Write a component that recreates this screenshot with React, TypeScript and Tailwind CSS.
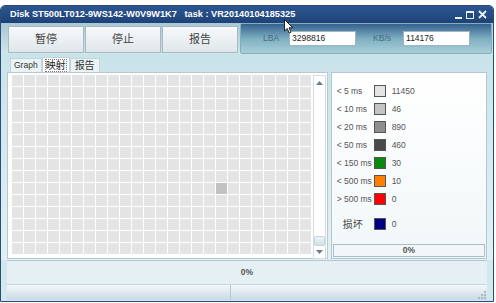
import React from 'react';

const COLS = 25;
const ROWS = 15;

const legend = [
  { label: '< 5 ms', color: '#e4e4e4', value: '11450' },
  { label: '< 10 ms', color: '#c4c4c4', value: '46' },
  { label: '< 20 ms', color: '#8e8e8e', value: '890' },
  { label: '< 50 ms', color: '#4a4a4a', value: '460' },
  { label: '< 150 ms', color: '#0a8a0a', value: '30' },
  { label: '< 500 ms', color: '#ff8000', value: '10' },
  { label: '> 500 ms', color: '#ff0000', value: '0' },
];

const ToolButton = ({ label }: { label: string }) => (
  <button className="w-[76px] h-[27px] border border-[#a9b8c2] bg-gradient-to-b from-[#f7f9fa] to-[#dfe6ea] text-[11px] text-[#444] flex items-center justify-center">
    {label}
  </button>
);

const LegendRow = ({ label, color, value }: { label: string; color: string; value: string }) => (
  <div className="flex items-center h-[18px]">
    <span className="w-[36px] text-[8.5px] text-[#555] whitespace-nowrap">{label}</span>
    <span className="w-[12px] h-[12px] border border-[#555] ml-[1px]" style={{ backgroundColor: color }} />
    <span className="ml-[6px] text-[8.5px] text-[#555]">{value}</span>
  </div>
);

export default function App() {
  const cells = [];
  for (let r = 0; r < ROWS; r++) {
    for (let c = 0; c < COLS; c++) {
      const hot = r === 9 && c === 17;
      cells.push(
        <div key={r + '-' + c} className={hot ? 'w-[11px] h-[11px] bg-[#c2c2c2]' : 'w-[11px] h-[11px] bg-[#e4e4e4]'} />
      );
    }
  }

  return (
    <div className="w-[496px] h-[303px] bg-white relative overflow-hidden" style={{ fontFamily: '"Liberation Sans", "Noto Sans CJK SC", sans-serif' }}>
      <div className="mt-[5px] w-[494px] h-[297px] rounded-t-[5px] border border-[#2a4c7a] bg-[#d3e8ec] flex flex-col overflow-hidden">
        {/* title bar */}
        <div className="h-[17px] shrink-0 bg-gradient-to-b from-[#2c5690] to-[#1e4277] flex items-center pl-[9px] pr-[6px]">
          <span className="text-white font-bold text-[9.2px] whitespace-nowrap">
            Disk ST500LT012-9WS142-W0V9W1K7 &nbsp;&nbsp;task : VR20140104185325
          </span>
          <div className="ml-auto flex items-center gap-[4px] text-white">
            <span className="w-[7px] h-[2px] bg-[#e8f0f8] mt-[6px]" />
            <span className="w-[8px] h-[8px] border-[1.5px] border-[#e8f0f8] border-t-[2.5px]" />
            <svg width="9" height="9" viewBox="0 0 9 9">
              <path d="M1 1 L8 8 M8 1 L1 8" stroke="#e8f0f8" strokeWidth="1.8" />
            </svg>
          </div>
        </div>

        {/* toolbar */}
        <div className="h-[31px] shrink-0 flex bg-gradient-to-b from-[#a8c8d3] to-[#cfe6eb]">
          <div className="pl-[7px] pt-[3px] flex gap-[1px]">
            <ToolButton label="暂停" />
            <ToolButton label="停止" />
            <ToolButton label="报告" />
          </div>
          <div className="ml-[2px] w-[252px] h-[31px] border border-[#86adbd] rounded-[2px] bg-gradient-to-b from-[#35628e] via-[#7eafc0] to-[#a9cfd8] flex items-center">
            <span className="ml-[22px] text-[8.5px] text-[#4b6b80]">LBA</span>
            <div className="ml-[10px] w-[67px] h-[15px] bg-white border border-[#9fb3c0] text-[8.5px] text-[#222] flex items-center pl-[2px]">3298816</div>
            <span className="ml-[17px] text-[8.5px] text-[#4b6b80]">KB/s</span>
            <div className="ml-[12px] w-[67px] h-[15px] bg-white border border-[#9fb3c0] text-[8.5px] text-[#222] flex items-center pl-[2px]">114176</div>
          </div>
        </div>

        {/* content */}
        <div className="flex-1 flex flex-col bg-gradient-to-b from-[#c9e4e9] to-[#e2f0f3] px-[6px]">
          {/* tabs */}
          <div className="h-[18px] shrink-0 flex items-end pl-[3px]">
            <div className="h-[14px] px-[3px] flex items-center text-[8.5px] text-[#333] bg-[#eaf3f5] border border-[#c2d3da] border-b-0">Graph</div>
            <div className="h-[15px] px-[3px] flex items-center bg-white border border-[#c2d3da] border-b-0">
              <span className="text-[10px] text-[#222] outline-1 outline-dotted outline-[#777] leading-[11px]">映射</span>
            </div>
            <div className="h-[14px] px-[4px] flex items-center text-[10px] text-[#333] bg-[#eaf3f5] border border-[#c2d3da] border-b-0">报告</div>
          </div>

          <div className="flex h-[187px] shrink-0">
            {/* map panel */}
            <div className="w-[322px] h-[187px] bg-white border border-[#b6c8d2] flex pl-[4px] pt-[2px]">
              <div className="grid grid-cols-[repeat(25,11px)] gap-[1px] content-start">{cells}</div>
              <div className="ml-[2px] w-[13px] h-[184px] border border-[#d4dde2] bg-white flex flex-col items-center">
                <svg width="7" height="4" viewBox="0 0 7 4" className="mt-[5px]">
                  <path d="M0 4 L3.5 0 L7 4 Z" fill="#6d7c86" />
                </svg>
                <div className="mt-auto w-[11px] h-[10px] rounded-[2px] bg-gradient-to-b from-[#eef4f8] to-[#d4e0e8] border border-[#c5d3dc]" />
                <svg width="7" height="4" viewBox="0 0 7 4" className="mt-[4px] mb-[4px]">
                  <path d="M0 0 L3.5 4 L7 0 Z" fill="#6d7c86" />
                </svg>
              </div>
            </div>

            {/* legend panel */}
            <div className="ml-[3px] w-[157px] h-[187px] border border-[#b3c6d1] bg-gradient-to-b from-[#ffffff] to-[#f1f7f9] flex flex-col px-[5px] pt-[9px]">
              {legend.map((l) => (
                <LegendRow key={l.label} {...l} />
              ))}
              <div className="flex items-center h-[18px] mt-[7px]">
                <span className="w-[36px] pl-[6px] text-[10px] text-[#444]">损坏</span>
                <span className="w-[12px] h-[12px] border border-[#555] ml-[1px] bg-[#000080]" />
                <span className="ml-[6px] text-[8.5px] text-[#555]">0</span>
              </div>
              <div className="mt-auto mb-[1px] -mx-[4px] h-[13px] border border-[#a9bdcb] flex items-center justify-center text-[8.5px] font-bold text-[#555]">0%</div>
            </div>
          </div>
        </div>

        {/* status */}
        <div className="h-[24px] shrink-0 border-t border-[#b4c8d4] bg-[#e6f0f4] mx-[6px] flex items-center justify-center text-[8.5px] font-bold text-[#555]">0%</div>
        <div className="h-[17px] shrink-0 bg-[#d3e8ec] px-[6px] pb-[1px]">
          <div className="h-full flex border-t border-[#c4d6e0] bg-gradient-to-b from-[#f4f8fa] to-[#c9dae5]">
            <div className="w-[224px] border-r border-[#b5c7d3]" />
            <div className="flex-1 flex justify-end items-end pr-[1px] pb-[1px]">
              <svg width="8" height="8" viewBox="0 0 8 8">
                <rect x="6" y="0" width="2" height="2" fill="#a9bac6" />
                <rect x="3" y="3" width="2" height="2" fill="#a9bac6" />
                <rect x="6" y="3" width="2" height="2" fill="#a9bac6" />
                <rect x="0" y="6" width="2" height="2" fill="#a9bac6" />
                <rect x="3" y="6" width="2" height="2" fill="#a9bac6" />
                <rect x="6" y="6" width="2" height="2" fill="#a9bac6" />
              </svg>
            </div>
          </div>
        </div>
      </div>

      {/* mouse cursor */}
      <svg width="10" height="15" viewBox="0 0 10 15" className="absolute left-[284px] top-[19px]">
        <path d="M0.5 0.5 L0.5 12 L3.2 9.5 L5.2 14 L7 13.2 L5 8.8 L8.8 8.8 Z" fill="#fff" stroke="#222" strokeWidth="1" />
      </svg>
    </div>
  );
}
